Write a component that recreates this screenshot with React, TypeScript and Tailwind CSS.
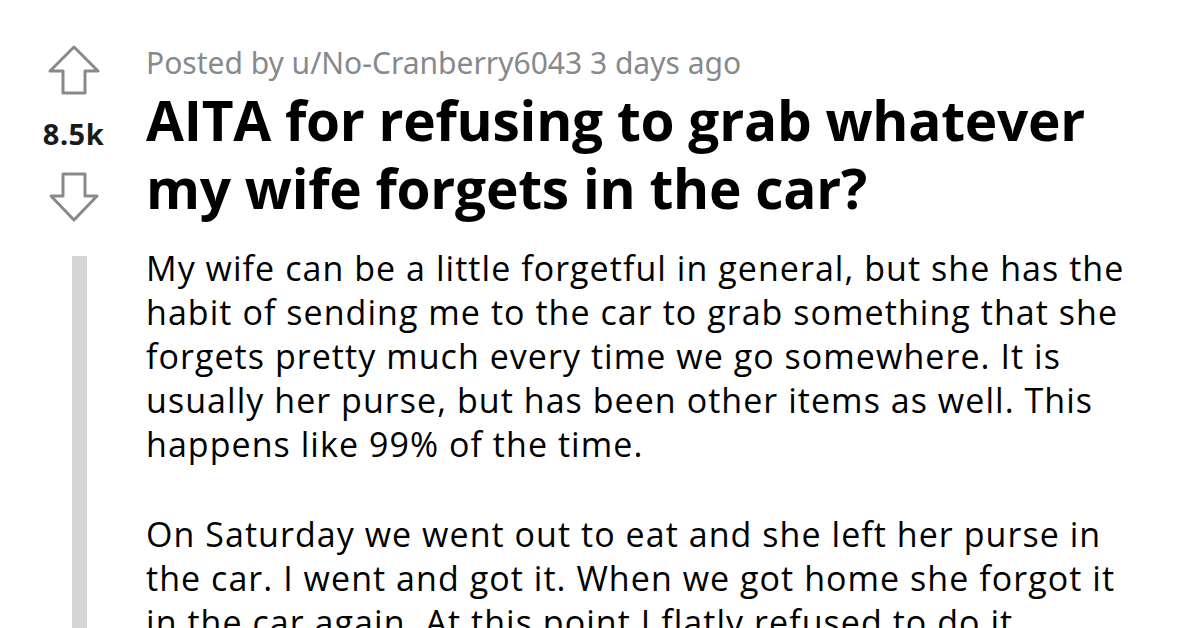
const UpArrow = () => (
  <svg width="52" height="52" viewBox="0 0 52 52" fill="none">
    <path
      d="M26 2 L50 26 L37 26 L37 48 L15 48 L15 26 L2 26 Z"
      stroke="#878a8c"
      strokeWidth="3"
      strokeLinejoin="round"
    />
  </svg>
);

const DownArrow = () => (
  <svg width="52" height="52" viewBox="0 0 52 52" fill="none">
    <path
      d="M26 50 L49 26 L37 26 L37 4 L15 4 L15 26 L3 26 Z"
      stroke="#878a8c"
      strokeWidth="3"
      strokeLinejoin="round"
    />
  </svg>
);

const App = () => {
  return (
    <div className="w-[1200px] h-[628px] overflow-hidden bg-white flex">
      <div className="w-[146px] shrink-0 flex flex-col">
        <div className="w-[146px] flex flex-col items-center pt-[45px] pl-[2px]">
          <UpArrow />
          <div className="font-['Noto_Sans',sans-serif] font-bold text-[29px] tracking-[0.5px] leading-none text-[#1a1a1b] mt-[22px] -ml-[1px]">
            8.5k
          </div>
          <div className="mt-[22px]">
            <DownArrow />
          </div>
        </div>
        <div className="mt-[34px] ml-[72px] w-[15px] flex-1 bg-[#d5d5d5]"></div>
      </div>
      <div className="flex-1">
        <div className="font-['Noto_Sans',sans-serif] text-[30px] text-[#878a8c] mt-[43px] leading-[40px]">
          Posted by u/No-Cranberry6043 3 days ago
        </div>
        <h1 className="font-['Open_Sans',sans-serif] font-bold text-[55px] leading-[68px] text-black mt-[3px] tracking-[-0.25px] w-[1000px]">
          AITA for refusing to grab whatever my wife forgets in the car?
        </h1>
        <div className="font-['Open_Sans',sans-serif] text-[34px] tracking-[1.05px] leading-[44px] text-black mt-[24px] w-[1000px]">
          <p>
            My wife can be a little forgetful in general, but she has the habit of sending me to the car to grab something that she forgets pretty much every time we go somewhere. It is usually her purse, but has been other items as well. This happens like 99% of the time.
          </p>
          <p className="mt-[46px]">
            On Saturday we went out to eat and she left her purse in the car. I went and got it. When we got home she forgot it in the car again. At this point I flatly refused to do it.
          </p>
        </div>
      </div>
    </div>
  );
};

export default App;
